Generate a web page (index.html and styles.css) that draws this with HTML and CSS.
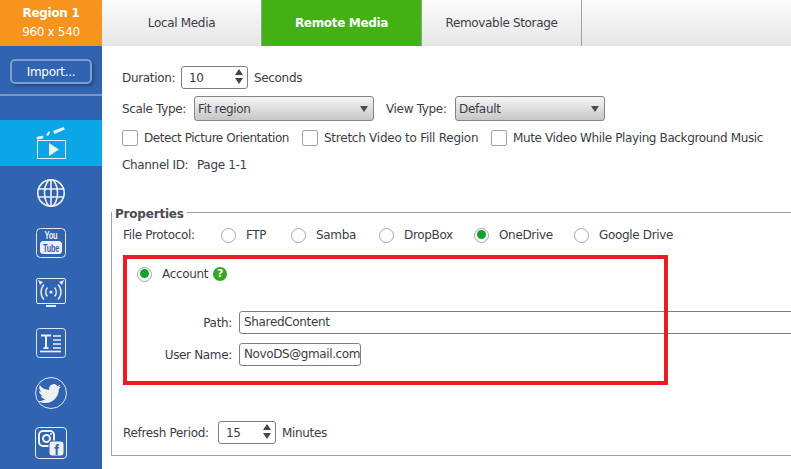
FILE: index.html
```html
<!DOCTYPE html>
<html lang="en">
<head>
<meta charset="utf-8">
<title>Remote Media</title>
<link rel="stylesheet" href="styles.css">
</head>
<body>
<div class="app">
  <aside class="sidebar">
    <div class="region"><strong>Region 1</strong><span>960 x 540</span></div>
    <div class="import-wrap"><button class="import">Import...</button></div>
    <nav class="icons">
      <a class="icon-item active">
        <svg width="32" height="34" viewBox="0 0 32 34" fill="none" stroke="#fff" stroke-width="1">
          <rect x="2.500" y="14.500" width="28" height="18" stroke="#dff2fc"/>
          <path d="M1.500 11 8 9.500 8.500 12.500 2 13.500Z M11 9 14 5 15 6.500 13 10Z M18 5 28.500 1 30 3.500 19.500 8Z" fill="#e8f4fb" stroke="none"/>
          <path d="M14 17 24 23.500 14 30Z" fill="#e8f4fb" stroke="none"/>
        </svg>
      </a>
      <a class="icon-item">
        <svg width="30" height="30" viewBox="0 0 30 30" fill="none" stroke="#f0f0f0" stroke-width="1.600">
          <circle cx="15" cy="15" r="13.200"/>
          <ellipse cx="15" cy="15" rx="6.500" ry="13.200"/>
          <path d="M2.500 11H27.500M2.500 19H27.500M15 2V28"/>
        </svg>
      </a>
      <a class="icon-item">
        <svg width="32" height="32" viewBox="0 0 32 32" fill="none">
          <rect x="1.500" y="1.500" width="29" height="29" rx="4" stroke="#dfe6f2" stroke-width="1"/>
          <text class="yt" x="16" y="12" text-anchor="middle" textLength="13" lengthAdjust="spacingAndGlyphs">You</text>
          <rect x="5" y="14" width="22" height="13" rx="3.500" fill="#f0f0f0"/>
          <text class="yt tube" x="16" y="25" text-anchor="middle" textLength="16" lengthAdjust="spacingAndGlyphs">Tube</text>
        </svg>
      </a>
      <a class="icon-item">
        <svg width="32" height="32" viewBox="0 0 32 32" fill="none" stroke="#e4e9f3" stroke-width="1">
          <rect x="1.500" y="1.500" width="29" height="25" rx="1.500"/>
          <path d="M11 29H21" stroke-width="2"/>
          <circle cx="16" cy="15" r="1.600" fill="#e4e9f3" stroke="none"/>
          <path d="M12.500 10.500a6.500 6.500 0 0 0 0 9M19.500 10.500a6.500 6.500 0 0 1 0 9M9 7.500a11 11 0 0 0 0 15M23 7.500a11 11 0 0 1 0 15" stroke-width="1.500"/>
          <path d="M3 3 8 5 5 8ZM29 3 24 5 27 8Z" fill="#e4e9f3" stroke="none"/>
        </svg>
      </a>
      <a class="icon-item">
        <svg width="32" height="32" viewBox="0 0 32 32" fill="none" stroke="#eef0f5">
          <rect x="1.500" y="1.500" width="29" height="29" rx="3" stroke-width="1" stroke="#dfe6f2"/>
          <path d="M6 8.500H16M11 8.500V21M8.500 21H13.500" stroke-width="2"/>
          <path d="M18 9H26M18 13H26M18 17H26M18 21H26" stroke-width="1.700"/>
          <path d="M5 24.500H26" stroke-width="1.700"/>
        </svg>
      </a>
      <a class="icon-item">
        <svg width="34" height="34" viewBox="0 0 34 34" fill="none">
          <circle cx="17" cy="17" r="15.500" stroke="#dfe6f2" stroke-width="1"/>
          <path d="M27 10.500c-1 .5-2 .7-2.700.8 1-.6 1.700-1.500 2-2.600-.9.6-2 1-3 1.200a4.600 4.600 0 0 0-8 4.200c-3.800-.2-7.200-2-9.500-4.800-1.200 2.100-.6 4.800 1.500 6.200-.8 0-1.500-.2-2.100-.6 0 2.300 1.600 4.200 3.700 4.700-.7.200-1.400.2-2.100.1.600 1.900 2.300 3.200 4.400 3.200-2 1.600-4.500 2.300-7 2 2.100 1.300 4.600 2.100 7.200 2.100 8.700 0 13.700-7.400 13.400-14 .9-.7 1.700-1.500 2.200-2.700Z" fill="#f0f0f0"/>
        </svg>
      </a>
      <a class="icon-item">
        <svg width="34" height="34" viewBox="0 0 34 34" fill="none">
          <rect x="1.500" y="1.500" width="31" height="31" rx="3.500" stroke="#e6ebf4" stroke-width="1"/>
          <rect x="5" y="5" width="15" height="15" rx="4" stroke="#f0f0f0" stroke-width="2"/>
          <circle cx="12.500" cy="12.500" r="3.500" stroke="#f0f0f0" stroke-width="2"/>
          <circle cx="17" cy="8" r="1" fill="#f0f0f0"/>
          <rect x="15" y="15" width="15" height="15" rx="3" fill="#f0f0f0" stroke="#3064b0"/>
          <text class="fb" x="22.500" y="29" text-anchor="middle">f</text>
        </svg>
      </a>
    </nav>
  </aside>

  <main class="main">
    <div class="tabs">
      <div class="tab tab-local">Local Media</div>
      <div class="tab tab-remote">Remote Media</div>
      <div class="tab tab-storage">Removable Storage</div>
    </div>

    <section class="options">
      <div class="row row-duration">
        <span class="duration-label">Duration:</span>
        <div class="spin spin-duration"><span>10</span><i class="arrows"><b class="up"></b><b class="down"></b></i></div>
        <span>Seconds</span>
      </div>
      <div class="row row-scale">
        <span class="scale-label">Scale Type:</span>
        <div class="select select-scale">Fit region<i class="caret"></i></div>
        <span class="view-label">View Type:</span>
        <div class="select select-view">Default<i class="caret"></i></div>
      </div>
      <div class="row row-checks">
        <i class="check"></i><span class="check-a">Detect Picture Orientation</span>
        <i class="check"></i><span class="check-b">Stretch Video to Fill Region</span>
        <i class="check"></i><span class="check-c">Mute Video While Playing Background Music</span>
      </div>
      <div class="row row-channel"><span class="channel-label">Channel ID:</span><span>Page 1-1</span></div>
    </section>

    <fieldset class="props">
      <legend>Properties</legend>
      <div class="row row-protocol">
        <span class="protocol-label">File Protocol:</span>
        <i class="radio"></i><span class="p-ftp">FTP</span>
        <i class="radio"></i><span class="p-samba">Samba</span>
        <i class="radio"></i><span class="p-dropbox">DropBox</span>
        <i class="radio on"></i><span class="p-onedrive">OneDrive</span>
        <i class="radio"></i><span>Google Drive</span>
      </div>
      <div class="row row-account">
        <i class="radio on"></i><span class="account-label">Account</span><i class="help">?</i>
      </div>
      <div class="row row-path">
        <label class="field-label">Path:</label>
        <div class="field field-path">SharedContent</div>
      </div>
      <div class="row row-user">
        <label class="field-label">User Name:</label>
        <div class="field field-user">NovoDS@gmail.com</div>
      </div>
      <div class="row row-refresh">
        <span class="refresh-label">Refresh Period:</span>
        <div class="spin spin-refresh"><span>15</span><i class="arrows"><b class="up"></b><b class="down"></b></i></div>
        <span>Minutes</span>
      </div>
      <div class="callout"></div>
    </fieldset>
  </main>
</div>
</body>
</html>
```
FILE: styles.css
```css
* { box-sizing: border-box; }
html, body { margin: 0; height: 100%; overflow: hidden; background: #fff; }
body { font: 12px/16px "DejaVu Sans", Verdana, sans-serif; letter-spacing: -0.33px; color: #3c3c46; }
.app { display: flex; width: 791px; height: 469px; overflow: hidden; }

.sidebar { flex: 0 0 102px; background: #3064b0; color: #fff; }
.region { height: 46px; background: #f7941e; display: flex; flex-direction: column; align-items: center; padding-top: 4px; line-height: 18px; }
.region strong { font-size: 12px; letter-spacing: -0.3px; }
.region span { line-height: 20px; }
.import-wrap { height: 50px; padding: 13px 0 0 10px; border-bottom: 2px solid #7f96b9; }
.import { display: block; width: 82px; height: 25px; padding: 0; background: #3064b0; color: #fff; border: 2px solid #7f9ccb; border-radius: 5px; font: inherit; letter-spacing: -0.3px; box-shadow: 2px 2px 3px rgba(20, 40, 80, .45); }
.icons { display: flex; flex-direction: column; gap: 4px; padding-top: 24px; }
.icon-item { display: flex; height: 46px; align-items: center; justify-content: center; }
.icon-item.active { background: #0ca6e8; }
.yt { font: bold 11px "Liberation Sans", sans-serif; fill: #f0f0f0; }
.tube { fill: #3064b0; }
.fb { font: bold 14px "Liberation Sans", sans-serif; fill: #3064b0; }

.main { flex: 1; min-width: 0; }
.tabs { display: flex; height: 46px; background: linear-gradient(#fbfbfb, #e6e6e6); }
.tab { display: flex; align-items: center; justify-content: center; padding-bottom: 1px; }
.tab-local { width: 159px; }
.tab-remote { width: 161px; background: #43b014; color: #fff; font-weight: bold; border: solid #8aa884; border-width: 0 1px; }
.tab-storage { width: 160px; border-right: 1px solid #a0a0a0; }

.row { display: flex; align-items: center; white-space: nowrap; }
.row > * { flex: none; }
.options { padding: 20px 0 0 20px; height: 157px; }
.row-duration { height: 23px; }
.duration-label { width: 59px; }
.spin { position: relative; display: flex; align-items: center; height: 23px; border: 1px solid #808080; border-radius: 3px; background: #fff; padding-left: 7px; }
.spin-duration { width: 67px; margin-right: 6px; }
.spin-refresh { width: 58px; margin-right: 6px; }
.arrows { position: absolute; right: 4px; top: 2px; display: flex; flex-direction: column; gap: 3px; }
.arrows b { display: block; width: 0; height: 0; border: 4px solid transparent; border-width: 0 4px; }
.arrows .up { border-bottom: 6px solid #454545; }
.arrows .down { border-top: 6px solid #454545; }

.row-scale { height: 25px; margin-top: 7px; }
.scale-label { width: 72px; }
.select { position: relative; height: 25px; line-height: 25px; padding-left: 3px; border: 1px solid #858585; border-radius: 3px; background: linear-gradient(#f6f6f6, #c6c6c6); }
.select-scale { width: 180px; margin-right: 12px; }
.view-label { width: 69px; }
.select-view { width: 150px; }
.caret { position: absolute; right: 5px; top: 9px; width: 0; height: 0; border: solid transparent; border-width: 6px 4.500px 0; border-top-color: #4d4d4d; }

.row-checks { margin-top: 9px; height: 16px; }
.check { width: 16px; height: 16px; border: 1px solid #a3a3a3; border-radius: 2px; background: #fff; margin-right: 6px; }
.check-a { width: 158px; letter-spacing: -0.45px; }
.check-b { width: 167px; letter-spacing: -0.25px; }
.check-c { letter-spacing: -0.38px; }
.row-channel { margin-top: 10px; height: 18px; }
.channel-label { width: 75px; }

.props { position: relative; margin: 0 -20px 0 9px; padding: 6px 0 0 11px; height: 253px; border: 1px solid #a0a0a0; border-width: 1px 0 1px 1px; min-width: 0; }
.props legend { padding: 4px 3px 0; margin-left: -11px; font-weight: bold; letter-spacing: -0.2px; color: #4a4a55; line-height: 14px; }
.row-protocol { height: 16px; }
.protocol-label { width: 98px; }
.radio { position: relative; width: 15px; height: 15px; border: 1.500px solid #a8a8a8; border-radius: 50%; background: #fff; margin-right: 10px; }
.radio.on::after { content: ""; position: absolute; left: 1.500px; top: 1.500px; width: 9px; height: 9px; border-radius: 50%; background: #12a32b; }
.p-ftp { width: 45px; }
.p-samba { width: 63px; }
.p-dropbox { width: 70px; }
.p-onedrive { width: 75px; }
.row-account { height: 16px; margin: 23px 0 0 14px; }
.account-label { width: 51px; }
.help { width: 14px; height: 14px; border-radius: 50%; background: #2fa81e; color: #fff; font: bold 11px/14px "DejaVu Sans", sans-serif; text-align: center; }
.field-label { width: 109px; text-align: right; margin-right: 7px; }
.field { height: 23px; border: 1px solid #808080; border-radius: 3px; padding-left: 4px; line-height: 21px; background: #fff; }
.row-path { margin-top: 29px; height: 23px; }
.field-path { width: 600px; }
.row-user { margin-top: 9px; height: 23px; }
.field-user { width: 122px; overflow: hidden; letter-spacing: -0.4px; }
.row-refresh { margin-top: 55px; height: 23px; }
.refresh-label { width: 95px; }
.callout { position: absolute; left: 11px; top: 34px; width: 545px; height: 130px; border: 4px solid #ed1c24; }
```
